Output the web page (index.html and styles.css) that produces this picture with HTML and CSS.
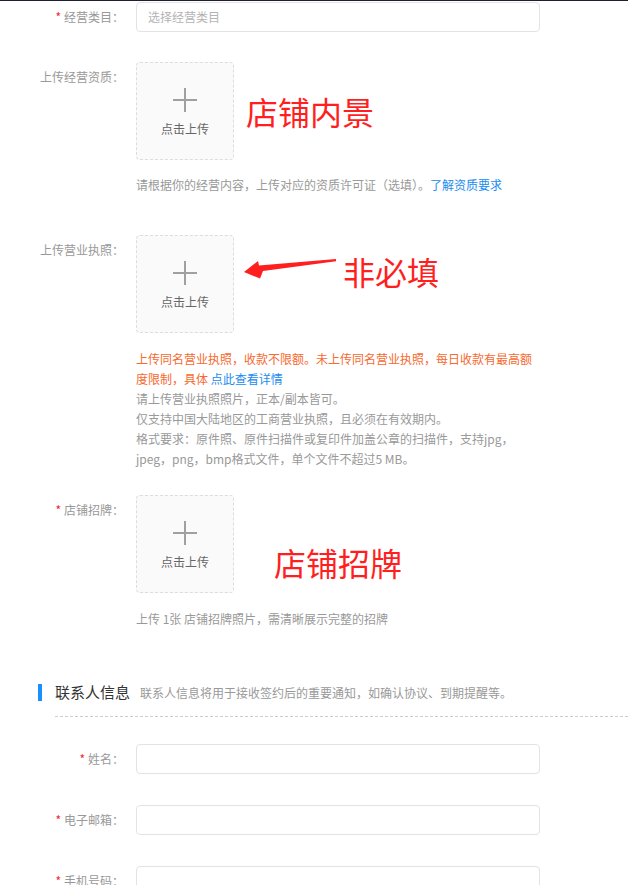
FILE: index.html
```html
<!DOCTYPE html>
<html lang="zh-CN">
<head>
<meta charset="utf-8">
<title>店铺资料</title>
<link rel="stylesheet" href="styles.css">
</head>
<body>
<div class="topbar"></div>
<div class="form">
  <div class="form-item item-category">
    <div class="label"><span class="req">*</span>经营类目：</div>
    <div class="content">
      <div class="input placeholder">选择经营类目</div>
    </div>
  </div>

  <div class="form-item item-upload1">
    <div class="label">上传经营资质：</div>
    <div class="content">
      <div class="upload">
        <span class="plus"></span>
        <span class="upload-text">点击上传</span>
      </div>
      <div class="annot annot-1">店铺内景</div>
      <div class="hint hint-1">请根据你的经营内容，上传对应的资质许可证（选填）。<a class="link">了解资质要求</a></div>
    </div>
  </div>

  <div class="form-item item-upload2">
    <div class="label">上传营业执照：</div>
    <div class="content">
      <div class="upload">
        <span class="plus"></span>
        <span class="upload-text">点击上传</span>
      </div>
      <svg class="arrow" width="100" height="27" viewBox="240 255 100 27">
        <polygon points="244,272 258,261 259,265.5 336,259 336,261.3 263,271 260,278.5" fill="#ff1f1f"/>
      </svg>
      <div class="annot annot-2">非必填</div>
      <div class="tips">
        <p class="warn">上传同名营业执照，收款不限额。未上传同名营业执照，每日收款有最高额度限制，具体 <a class="link">点此查看详情</a></p>
        <p>请上传营业执照照片，正本/副本皆可。</p>
        <p>仅支持中国大陆地区的工商营业执照，且必须在有效期内。</p>
        <p>格式要求：原件照、原件扫描件或复印件加盖公章的扫描件，支持jpg，jpeg，png，bmp格式文件，单个文件不超过5 MB。</p>
      </div>
    </div>
  </div>

  <div class="form-item item-upload3">
    <div class="label"><span class="req">*</span>店铺招牌：</div>
    <div class="content">
      <div class="upload">
        <span class="plus"></span>
        <span class="upload-text">点击上传</span>
      </div>
      <div class="annot annot-3">店铺招牌</div>
      <div class="hint hint-3">上传 1张 店铺招牌照片，需清晰展示完整的招牌</div>
    </div>
  </div>

  <div class="section-head">
    <span class="bar"></span>
    <span class="section-title">联系人信息</span>
    <span class="section-sub">联系人信息将用于接收签约后的重要通知，如确认协议、到期提醒等。</span>
  </div>
  <div class="divider"></div>

  <div class="form-item item-contact item-name">
    <div class="label"><span class="req">*</span>姓名：</div>
    <div class="content"><div class="input"></div></div>
  </div>
  <div class="form-item item-contact">
    <div class="label"><span class="req">*</span>电子邮箱：</div>
    <div class="content"><div class="input"></div></div>
  </div>
  <div class="form-item item-contact">
    <div class="label"><span class="req">*</span>手机号码：</div>
    <div class="content"><div class="input"></div></div>
  </div>
</div>
</body>
</html>
```
FILE: styles.css
```css
html, body {
  margin: 0;
  padding: 0;
  background: #ffffff;
}
body {
  font-family: "Noto Sans CJK SC", "Microsoft YaHei", "Liberation Sans", sans-serif;
  font-size: 12px;
  color: #999999;
  overflow: hidden;
  height: 885px;
}
.topbar {
  height: 1px;
  background: #1d2030;
}
.form {
  padding-top: 1px;
}
.form-item {
  display: flex;
  align-items: flex-start;
}
.label {
  width: 124px;
  flex-shrink: 0;
  text-align: right;
  line-height: 30px;
  font-size: 12px;
  color: #999999;
  white-space: nowrap;
}
.req {
  color: #f5222d;
  margin-right: 3px;
}
.content {
  position: relative;
  margin-left: 12px;
  width: 400px;
}
.input {
  box-sizing: border-box;
  width: 404px;
  height: 30px;
  border: 1px solid #e3e3e3;
  border-radius: 4px;
  background: #ffffff;
}
.placeholder {
  line-height: 28px;
  padding-left: 11px;
  color: #b4b4b4;
}
.upload {
  box-sizing: border-box;
  width: 98px;
  height: 98px;
  border: 1px dashed #dddddd;
  border-radius: 4px;
  background: #fafafa;
  display: flex;
  flex-direction: column;
  align-items: center;
}
.plus {
  position: relative;
  display: block;
  width: 24px;
  height: 24px;
  margin-top: 25px;
}
.plus::before,
.plus::after {
  content: "";
  position: absolute;
  background: #a0a0a0;
}
.plus::before {
  left: 0;
  top: 11px;
  width: 24px;
  height: 2px;
}
.plus::after {
  left: 11px;
  top: 0;
  width: 2px;
  height: 24px;
}
.upload-text {
  display: block;
  margin-top: 8px;
  line-height: 18px;
  color: #666666;
}
.annot {
  position: absolute;
  font-size: 32px;
  line-height: 36px;
  color: #ff1f1f;
  white-space: nowrap;
}
.annot-1 { left: 110px; top: 31px; }
.annot-2 { left: 207px; top: 18px; }
.annot-3 { left: 138px; top: 49px; }
.arrow {
  position: absolute;
  left: 104px;
  top: 20px;
}
.hint {
  line-height: 20px;
  color: #999999;
  white-space: nowrap;
}
.hint-1 { margin-top: 15px; }
.hint-3 { margin-top: 16px; }
.link {
  color: #1a8cf0;
  text-decoration: none;
}
.tips {
  margin-top: 16px;
  line-height: 20px;
}
.tips p {
  margin: 0;
}
.tips .warn {
  color: #f7692e;
}
.item-category { margin-top: 0; }
.item-upload1 { margin-top: 30px; }
.item-upload2 { margin-top: 40px; }
.item-upload3 { margin-top: 26px; }
.section-head {
  display: flex;
  align-items: center;
  margin-top: 54px;
  padding-left: 38px;
  height: 18px;
}
.bar {
  width: 4px;
  height: 17px;
  background: #1890ff;
  margin-right: 13px;
}
.section-title {
  font-size: 15px;
  line-height: 18px;
  color: #333333;
}
.section-sub {
  margin-left: 10px;
  font-size: 12px;
  color: #999999;
  white-space: nowrap;
}
.divider {
  margin-top: 15px;
  margin-left: 55px;
  border-top: 1px dashed #cccccc;
}
.item-contact { margin-top: 31px; }
.item-contact.item-name { margin-top: 27px; }
```
